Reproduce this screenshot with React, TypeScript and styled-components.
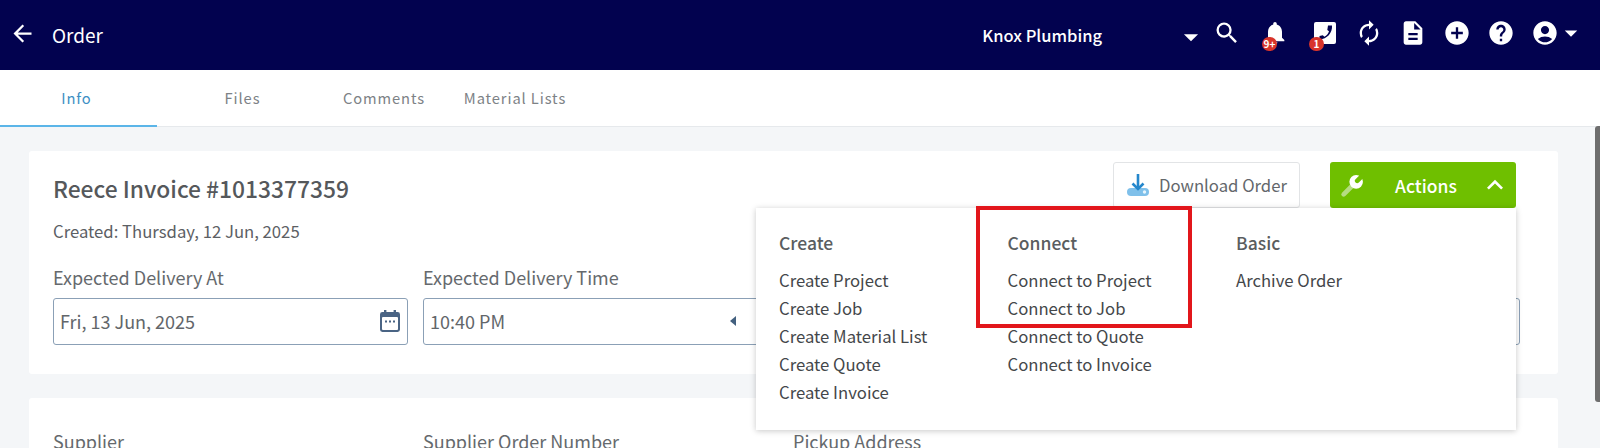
import React from 'react';
import styled, { createGlobalStyle } from 'styled-components';
import {
  MdAccountCircle,
  MdAddCircle,
  MdArrowBack,
  MdArrowDropDown,
  MdDescription,
  MdExpandLess,
  MdHelp,
  MdNotifications,
  MdSearch,
  MdSync,
} from 'react-icons/md';

const menuColumns = [
  { title: 'Create', items: ['Create Project', 'Create Job', 'Create Material List', 'Create Quote', 'Create Invoice'] },
  { title: 'Connect', items: ['Connect to Project', 'Connect to Job', 'Connect to Quote', 'Connect to Invoice'] },
  { title: 'Basic', items: ['Archive Order'] },
];

const GlobalStyle = createGlobalStyle`
  html, body {
    margin: 0;
    height: 448px;
    overflow: hidden;
    background: #f4f6f8;
    font-family: 'Noto Sans CJK SC', 'Noto Sans', sans-serif;
  }
`;

const Page = styled.div`
  position: relative;
  width: 1600px;
  height: 448px;
  overflow: hidden;
`;

const TopBar = styled.header`
  display: flex;
  align-items: center;
  height: 70px;
  background: #02024f;
  color: #fff;
  padding: 0 0 4px 9px;
  box-sizing: border-box;
`;

const BackIcon = styled(MdArrowBack)`
  font-size: 27px;
  margin-right: 16px;
`;

const PageTitle = styled.div`
  font-size: 19px;
  line-height: 26px;
  margin-top: 4px;
`;

const CompanyName = styled.div`
  margin-left: auto;
  font-size: 16.5px;
  line-height: 26px;
  font-weight: 500;
  margin-top: 4px;
`;

const Caret = styled(MdArrowDropDown)`
  font-size: 34px;
  margin: 8px 0 0 72px;
`;

const IconRow = styled.div`
  display: flex;
  align-items: center;
  margin-left: -3px;
  padding-right: 14px;
`;

const IconSlot = styled.div`
  position: relative;
  width: 44px;
  height: 30px;
  margin-left: ${(p) => p.$gap || 0}px;
  display: flex;
  align-items: center;
  justify-content: center;
  font-size: 28px;
`;

const Badge = styled.span`
  position: absolute;
  left: ${(p) => p.$left}px;
  top: 19px;
  min-width: 15px;
  height: 14px;
  border-radius: 8px;
  background: #d8342b;
  color: #fff;
  font-size: 10px;
  font-weight: 700;
  line-height: 14px;
  text-align: center;
`;

const SyncIcon = styled(MdSync)`
  transform: scaleX(-1);
`;

const SmallCaret = styled(MdArrowDropDown)`
  font-size: 30px;
  margin-left: -11px;
`;

const Tabs = styled.nav`
  display: flex;
  height: 57px;
  background: #fff;
  border-bottom: 1px solid #e6e9ec;
  box-sizing: border-box;
`;

const Tab = styled.div`
  width: ${(p) => p.$width}px;
  height: 57px;
  display: flex;
  align-items: center;
  justify-content: center;
  box-sizing: border-box;
  padding-right: ${(p) => (p.$active ? 4 : 0)}px;
  font-size: 14.7px;
  letter-spacing: 0.9px;
  color: ${(p) => (p.$active ? '#3d8fc4' : '#7d8286')};
  border-bottom: 2px solid ${(p) => (p.$active ? '#5bb5e8' : 'transparent')};
`;

const Content = styled.main`
  padding: 24px 42px 0 29px;
  display: flex;
  flex-direction: column;
  gap: 24px;
`;

const Card = styled.section`
  position: relative;
  background: #fff;
  border-radius: 3px;
  padding: 24px 42px 0 24px;
  height: ${(p) => p.$height}px;
  box-sizing: border-box;
`;

const CardHeader = styled.div`
  display: flex;
  justify-content: space-between;
  height: 46px;
  margin-top: -13px;
`;

const OrderTitle = styled.h1`
  margin: 11px 0 0;
  font-size: 22.8px;
  line-height: 32px;
  font-weight: 500;
  color: #55585b;
`;

const HeaderActions = styled.div`
  display: flex;
  gap: 30px;
`;

const DownloadButton = styled.button`
  display: flex;
  align-items: center;
  gap: 9px;
  width: 187px;
  height: 46px;
  padding: 0 12px;
  box-sizing: border-box;
  background: #fff;
  border: 1px solid #e2e4e6;
  border-radius: 3px;
  font: inherit;
  font-size: 16.7px;
  color: #63676b;
  white-space: nowrap;
  svg {
    flex-shrink: 0;
  }
`;

const ActionsButton = styled.button`
  display: flex;
  align-items: center;
  justify-content: space-between;
  width: 186px;
  height: 46px;
  padding: 0 5px 0 10px;
  box-sizing: border-box;
  background: #6fbf00;
  border: 0;
  border-radius: 3px;
  font: inherit;
  font-size: 17.5px;
  font-weight: 500;
  color: #fff;
  svg:first-child {
    margin-right: 8px;
  }
`;

const Chevron = styled(MdExpandLess)`
  font-size: 32px;
`;

const CreatedAt = styled.div`
  margin-top: 11px;
  font-size: 16.7px;
  line-height: 24px;
  color: #5c6064;
`;

const FieldGrid = styled.div`
  display: grid;
  grid-template-columns: 355px 355px 355px 357px;
  column-gap: 15px;
  margin-top: ${(p) => p.$top}px;
`;

const Field = styled.div`
  display: flex;
  flex-direction: column;
`;

const FieldLabel = styled.label`
  font-size: 18px;
  line-height: 24px;
  color: #65696d;
  margin-bottom: 9px;
`;

const InputBox = styled.div`
  display: flex;
  align-items: center;
  justify-content: space-between;
  height: 47px;
  padding: 0 7px 2px 6px;
  box-sizing: border-box;
  border: 1px solid #8ba0b6;
  border-radius: 3px;
  font-size: 18px;
  color: #62666a;
`;

const SpinArrow = styled.span`
  width: 0;
  height: 0;
  margin-right: 34px;
  border-top: 5px solid transparent;
  border-bottom: 5px solid transparent;
  border-right: 6px solid #43607f;
`;

const ActionMenu = styled.div`
  position: absolute;
  top: 57px;
  right: 42px;
  width: 760px;
  height: 222px;
  box-sizing: border-box;
  display: grid;
  grid-template-columns: repeat(3, 228.5px);
  padding: 22px 23px 0;
  background: #fff;
  box-shadow: 0 1px 6px rgba(0, 0, 0, 0.22);
  z-index: 2;
`;

const MenuColumn = styled.div`
  display: flex;
  flex-direction: column;
`;

const MenuTitle = styled.div`
  font-size: 17.5px;
  line-height: 26px;
  font-weight: 500;
  color: #5a5d60;
  margin-bottom: 10px;
`;

const MenuItem = styled.div`
  font-size: 16.7px;
  line-height: 28px;
  color: #44474a;
  white-space: nowrap;
`;

const Highlight = styled.div`
  position: absolute;
  left: 220px;
  top: -2px;
  width: 216px;
  height: 122px;
  box-sizing: border-box;
  border: 4px solid #e2161b;
  z-index: 3;
`;

const ScrollThumb = styled.div`
  position: absolute;
  right: 0;
  top: 126px;
  width: 5px;
  height: 276px;
  border-radius: 3px 0 0 3px;
  background: #6e6e6e;
`;

const PhoneTile = () => (
  <svg width="24" height="24" viewBox="0 0 24 24">
    <rect x="1" y="1" width="22" height="22" rx="2" fill="#fff" />
    <path
      d="M15 4.500h4c.6 7.500-5 13.500-12.500 14v-3.500l3.300-.8 1.600 1.500c2.300-1.100 3.900-3 4.600-5.400l-1.700-1.400z"
      fill="#02024f"
    />
  </svg>
);

const WrenchIcon = () => (
  <svg width="25" height="25" viewBox="0 0 24 24">
    <path d="M3.500 20.500 12 12" stroke="#b5dc82" strokeWidth="4.500" strokeLinecap="round" />
    <circle cx="15.500" cy="8.500" r="6.500" fill="#fff" />
    <path d="M16.500 7.500 22 2" stroke="#6fbf00" strokeWidth="4.500" strokeLinecap="round" />
  </svg>
);

const DownloadIcon = () => (
  <svg width="24" height="24" viewBox="0 0 24 24" style={{ marginTop: -1 }}>
    <rect x="1" y="15" width="22" height="8" rx="4" fill="#7fc0ea" />
    <circle cx="18.500" cy="19" r="1.700" fill="#e6f4fc" />
    <path d="M12 1v15" stroke="#2487cc" strokeWidth="2.600" />
    <path d="M6.500 10.500 12 16l5.500-5.500" fill="none" stroke="#2487cc" strokeWidth="2.600" />
  </svg>
);

const CalendarIcon = () => (
  <svg width="20" height="22" viewBox="0 0 20 22">
    <path
      d="M4 0h2.400v2h7.200V0H16v2h1.600A2.400 2.400 0 0 1 20 4.400v15.200a2.400 2.400 0 0 1-2.400 2.400H2.400A2.400 2.400 0 0 1 0 19.600V4.400A2.400 2.400 0 0 1 2.400 2H4z"
      fill="#4a6484"
    />
    <rect x="2" y="7" width="16" height="13" rx="1" fill="#fff" />
    <path d="M5 10.500h2v2H5zM9 10.500h2v2H9zM13 10.500h2v2h-2z" fill="#4a6484" />
  </svg>
);

export default function App() {
  return (
    <Page>
      <GlobalStyle />
      <TopBar>
        <BackIcon />
        <PageTitle>Order</PageTitle>
        <CompanyName>Knox Plumbing</CompanyName>
        <Caret />
        <IconRow>
          <IconSlot>
            <MdSearch />
          </IconSlot>
          <IconSlot $gap={4}>
            <MdNotifications />
            <Badge $left={9}>9+</Badge>
          </IconSlot>
          <IconSlot $gap={6}>
            <PhoneTile />
            <Badge $left={6}>1</Badge>
          </IconSlot>
          <IconSlot>
            <SyncIcon />
          </IconSlot>
          <IconSlot>
            <MdDescription />
          </IconSlot>
          <IconSlot>
            <MdAddCircle />
          </IconSlot>
          <IconSlot>
            <MdHelp />
          </IconSlot>
          <IconSlot>
            <MdAccountCircle />
          </IconSlot>
          <SmallCaret />
        </IconRow>
      </TopBar>
      <Tabs>
        <Tab $width={157} $active>
          Info
        </Tab>
        <Tab $width={171}>Files</Tab>
        <Tab $width={112}>Comments</Tab>
        <Tab $width={150}>Material Lists</Tab>
      </Tabs>
      <Content>
        <Card $height={223}>
          <CardHeader>
            <OrderTitle>Reece Invoice #1013377359</OrderTitle>
            <HeaderActions>
              <DownloadButton>
                <DownloadIcon />
                Download Order
              </DownloadButton>
              <ActionsButton>
                <WrenchIcon />
                Actions
                <Chevron />
              </ActionsButton>
            </HeaderActions>
          </CardHeader>
          <CreatedAt>Created: Thursday, 12 Jun, 2025</CreatedAt>
          <FieldGrid $top={22}>
            <Field>
              <FieldLabel>Expected Delivery At</FieldLabel>
              <InputBox>
                Fri, 13 Jun, 2025
                <CalendarIcon />
              </InputBox>
            </Field>
            <Field>
              <FieldLabel>Expected Delivery Time</FieldLabel>
              <InputBox>
                10:40 PM
                <SpinArrow />
              </InputBox>
            </Field>
            <Field />
            <Field>
              <FieldLabel>&nbsp;</FieldLabel>
              <InputBox />
            </Field>
          </FieldGrid>
          <ActionMenu>
            {menuColumns.map((col) => (
              <MenuColumn key={col.title}>
                <MenuTitle>{col.title}</MenuTitle>
                {col.items.map((item) => (
                  <MenuItem key={item}>{item}</MenuItem>
                ))}
              </MenuColumn>
            ))}
            <Highlight />
          </ActionMenu>
        </Card>
        <Card $height={120}>
          <FieldGrid $top={7}>
            <FieldLabel>Supplier</FieldLabel>
            <FieldLabel>Supplier Order Number</FieldLabel>
            <FieldLabel>Pickup Address</FieldLabel>
          </FieldGrid>
        </Card>
      </Content>
      <ScrollThumb />
    </Page>
  );
}
